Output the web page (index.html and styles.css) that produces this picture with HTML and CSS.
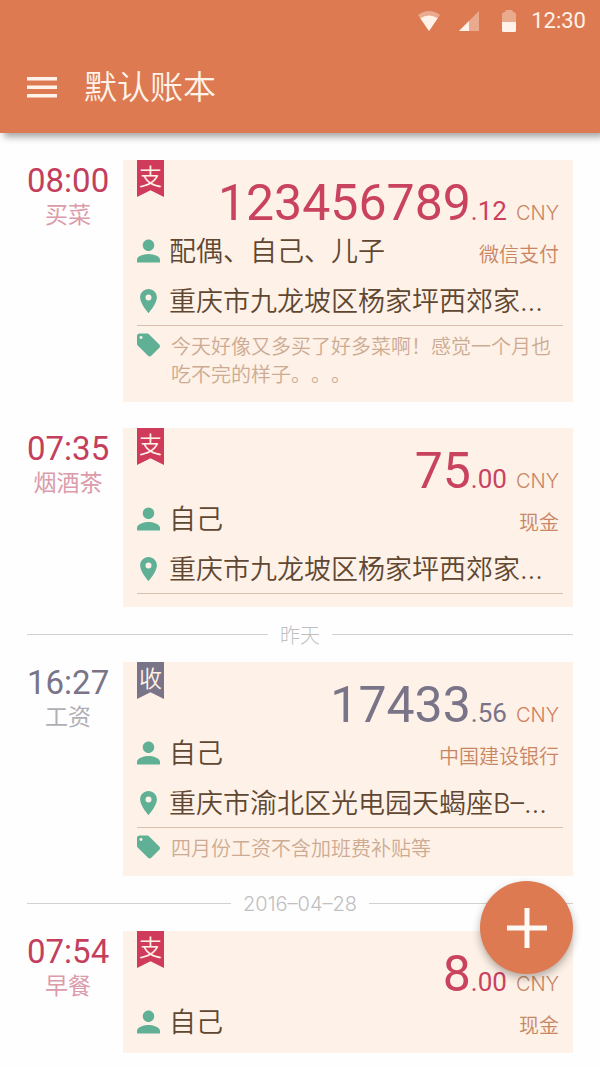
FILE: index.html
```html
<!DOCTYPE html>
<html lang="zh-CN">

<head>
    <meta charset="UTF-8">
    <meta name="viewport" content="width=device-width, initial-scale=1.0">
    <title>默认账本</title>
    <link rel="stylesheet" href="styles.css">
</head>

<body>
    <!-- 图标 -->
    <svg class="icons" aria-hidden="true">
        <symbol id="person" viewBox="4 4 16 16">
            <path d="M12 12c2.21 0 4-1.79 4-4s-1.79-4-4-4-4 1.79-4 4 1.79 4 4 4zm0 2c-2.67 0-8 1.34-8 4v2h16v-2c0-2.66-5.33-4-8-4z"/>
        </symbol>
        <symbol id="place" viewBox="2.4 2 19.2 20">
            <path d="M12 2C8.13 2 5 5.13 5 9c0 5.25 7 13 7 13s7-7.75 7-13c0-3.87-3.13-7-7-7zm0 9.5a2.5 2.5 0 0 1 0-5 2.5 2.5 0 0 1 0 5z"/>
        </symbol>
        <symbol id="tag" viewBox="2 2 20 20">
            <path d="M21.41 11.58l-9-9C12.05 2.22 11.55 2 11 2H4c-1.1 0-2 .9-2 2v7c0 .55.22 1.05.59 1.42l9 9c.36.36.86.58 1.41.58.55 0 1.05-.22 1.41-.59l7-7c.37-.36.59-.86.59-1.41 0-.55-.23-1.06-.59-1.42zM5.5 6.8a1.3 1.3 0 0 1 0-2.600 1.3 1.3 0 0 1 0 2.600z"/>
        </symbol>
    </svg>

    <header>
        <div class="status">
            <svg width="22" height="20" viewBox="0 0 22 20">
                <path d="M0 4Q11-4 22 4L11 20z" opacity=".4"/>
                <path d="M2.300 7.300Q11 1.500 19.700 7.300L11 20z"/>
            </svg>
            <svg class="signal" width="20" height="20" viewBox="0 0 20 20">
                <path d="M20 0v20H0z" opacity=".4"/>
                <path d="M10 10v10H0z"/>
            </svg>
            <svg class="battery" width="14" height="22" viewBox="0 0 14 22">
                <path d="M5 0h4q2 0 2 2 3 0 3 3v7H0V5q0-3 3-3 0-2 2-2z" opacity=".4"/>
                <path d="M0 12h14v8.500q0 1.500-1.500 1.500h-11Q0 22 0 20.500z"/>
            </svg>
            <span>12:30</span>
        </div>
        <div class="toolbar">
            <button class="menu" aria-label="菜单">
                <svg width="30" height="21" viewBox="0 0 30 21">
                    <path d="M0 0h30v3.500H0zM0 8.500h30V12H0zM0 17h30v3.500H0z"/>
                </svg>
            </button>
            <h1>默认账本</h1>
        </div>
    </header>

    <main>
        <article class="entry">
            <div class="when">
                <time>08:00</time>
                <p>买菜</p>
            </div>
            <div class="card">
                <span class="ribbon">支</span>
                <p class="amount">123456789<small>.12</small><span class="unit">CNY</span></p>
                <div class="row">
                    <svg><use href="#person"/></svg>
                    <span>配偶、自己、儿子</span>
                    <span class="pay">微信支付</span>
                </div>
                <div class="row place">
                    <svg><use href="#place"/></svg>
                    <span>重庆市九龙坡区杨家坪西郊家…</span>
                </div>
                <div class="note">
                    <svg><use href="#tag"/></svg>
                    <p>今天好像又多买了好多菜啊！感觉一个月也吃不完的样子。。。</p>
                </div>
            </div>
        </article>

        <article class="entry">
            <div class="when">
                <time>07:35</time>
                <p>烟酒茶</p>
            </div>
            <div class="card">
                <span class="ribbon">支</span>
                <p class="amount">75<small>.00</small><span class="unit">CNY</span></p>
                <div class="row">
                    <svg><use href="#person"/></svg>
                    <span>自己</span>
                    <span class="pay">现金</span>
                </div>
                <div class="row place">
                    <svg><use href="#place"/></svg>
                    <span>重庆市九龙坡区杨家坪西郊家…</span>
                </div>
            </div>
        </article>

        <h2 class="day">昨天</h2>

        <article class="entry income">
            <div class="when">
                <time>16:27</time>
                <p>工资</p>
            </div>
            <div class="card">
                <span class="ribbon">收</span>
                <p class="amount">17433<small>.56</small><span class="unit">CNY</span></p>
                <div class="row">
                    <svg><use href="#person"/></svg>
                    <span>自己</span>
                    <span class="pay">中国建设银行</span>
                </div>
                <div class="row place">
                    <svg><use href="#place"/></svg>
                    <span>重庆市渝北区光电园天蝎座B–…</span>
                </div>
                <div class="note">
                    <svg><use href="#tag"/></svg>
                    <p>四月份工资不含加班费补贴等</p>
                </div>
            </div>
        </article>

        <h2 class="day">2016–04–28</h2>

        <article class="entry">
            <div class="when">
                <time>07:54</time>
                <p>早餐</p>
            </div>
            <div class="card">
                <span class="ribbon">支</span>
                <p class="amount">8<small>.00</small><span class="unit">CNY</span></p>
                <div class="row">
                    <svg><use href="#person"/></svg>
                    <span>自己</span>
                    <span class="pay">现金</span>
                </div>
            </div>
        </article>
    </main>

    <button class="add" aria-label="记一笔">
        <svg width="40" height="40" viewBox="0 0 40 40">
            <path d="M17.500 0h5v17.500H40v5H22.500V40h-5V22.500H0v-5h17.500z"/>
        </svg>
    </button>
</body>

</html>
```
FILE: styles.css
```css
* {
    margin: 0;
    padding: 0;
    box-sizing: border-box;
}

body {
    background-color: #fefefe;
    color: #604732;
    font-family: Inter, "Noto Sans CJK SC", sans-serif;
    font-weight: 350;
    text-spacing-trim: space-all;
}

button {
    border: none;
    background: none;
    cursor: pointer;
}

svg {
    display: block;
    flex: none;
    fill: currentColor;
}

.icons {
    position: absolute;
    width: 0;
    height: 0;
}

/* 顶部 */
header {
    background-color: #dd7a52;
    color: #fff3e9;
    box-shadow: 4px 4px 7px rgba(0, 0, 0, 0.35);
}

.status {
    display: flex;
    justify-content: flex-end;
    align-items: center;
    height: 41px;
    padding-right: 14px;
    font: 22px/40px Roboto, sans-serif;
}

.signal {
    margin-left: 19px;
}

.battery {
    margin: 0 15px 0 23px;
}

.toolbar {
    display: flex;
    align-items: center;
    gap: 27px;
    height: 92px;
    padding: 0 27px;
}

.menu {
    color: inherit;
}

h1 {
    font-size: 33px;
    font-weight: 350;
    line-height: 48px;
}

/* 账单列表 */
main {
    padding: 27px 27px 14px;
}

.entry {
    display: flex;
    gap: 14px;
}

.entry + .entry {
    margin-top: 26px;
}

.when {
    flex: none;
    width: 82px;
    color: #c33f5c;
    text-align: center;
}

.when time {
    display: block;
    font: 33px/42px Roboto, sans-serif;
}

.when p {
    color: #dc9bab;
    font-size: 23px;
    font-weight: 400;
    line-height: 26px;
}

.card {
    position: relative;
    flex: 1;
    min-width: 0;
    padding: 13px 10px 13px 14px;
    background-color: #fef1e7;
}

.ribbon {
    position: absolute;
    top: 0;
    left: 14px;
    width: 27px;
    height: 37px;
    background-color: #d03a5b;
    color: #fff1e7;
    font-size: 23px;
    line-height: 34px;
    text-align: center;
    clip-path: polygon(0 0, 100% 0, 100% 100%, 50% 82%, 0 100%);
}

.amount {
    height: 60px;
    padding-right: 4px;
    color: #c9435f;
    font: 50px/60px Roboto, sans-serif;
    text-align: right;
}

.amount small {
    font-size: 26px;
}

.unit {
    margin-left: 9px;
    color: #c88665;
    font: 300 20px Inter, sans-serif;
}

.row {
    display: flex;
    align-items: center;
    gap: 9px;
    font-size: 27px;
    line-height: 36px;
}

.row svg,
.note svg {
    width: 23px;
    height: 24px;
    color: #60b095;
}

.row span {
    padding-top: 2px;
    line-height: 34px;
    white-space: nowrap;
}

.row .pay {
    margin-left: auto;
    padding: 8px 4px 0 0;
    color: #c88665;
    font-size: 20px;
    line-height: 28px;
}

.place {
    padding: 14px 0 6px;
    border-bottom: 1px solid #dabfad;
}

.note {
    display: flex;
    gap: 11px;
    padding: 7px 4px 0 0;
    color: #cdab93;
    font-size: 20px;
    line-height: 28px;
}

.income .when,
.income .amount {
    color: #797488;
}

.income .when p {
    color: #b0afb5;
}

.income .ribbon {
    background-color: #797488;
}

.income .unit {
    color: #d0805c;
}

/* 日期分隔 */
.day {
    display: flex;
    align-items: center;
    gap: 12px;
    height: 55px;
    color: #bfbfbf;
    font-size: 20px;
    font-weight: 300;
}

.day::before,
.day::after {
    content: "";
    flex: 1;
    height: 1px;
    background-color: #d2d2d2;
}

/* 记一笔 */
.add {
    position: fixed;
    right: 27px;
    bottom: 93px;
    display: flex;
    align-items: center;
    justify-content: center;
    width: 93px;
    height: 93px;
    border-radius: 50%;
    background-color: #dd7a52;
    color: #fffaf5;
    box-shadow: 0 4px 8px rgba(0, 0, 0, 0.3);
}
```
